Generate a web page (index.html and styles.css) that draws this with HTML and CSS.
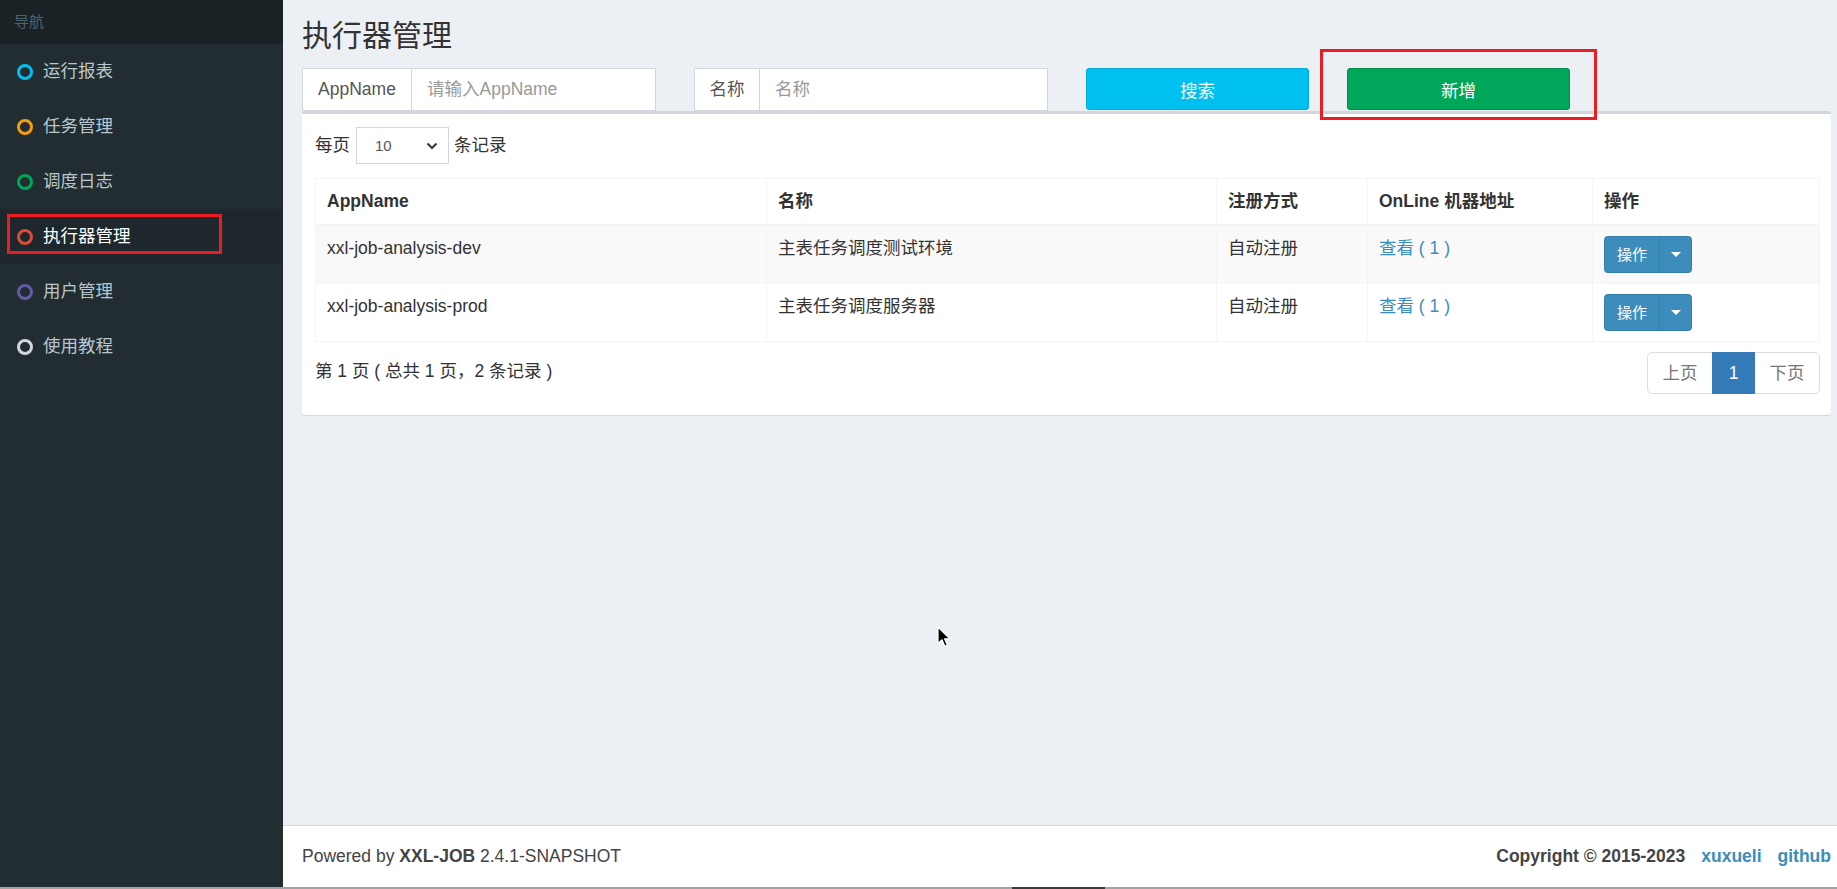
FILE: index.html
```html
<!DOCTYPE html>
<html lang="zh-CN">
<head>
<meta charset="utf-8">
<title>执行器管理</title>
<link rel="stylesheet" href="styles.css">
</head>
<body>
<div class="wrapper">
  <aside class="sidebar">
    <div class="sidebar-header">导航</div>
    <ul class="menu">
      <li class="menu-item"><span class="ring ring-aqua"></span><span>运行报表</span></li>
      <li class="menu-item"><span class="ring ring-yellow"></span><span>任务管理</span></li>
      <li class="menu-item"><span class="ring ring-green"></span><span>调度日志</span></li>
      <li class="menu-item active"><span class="ring ring-red"></span><span>执行器管理</span></li>
      <li class="menu-item"><span class="ring ring-purple"></span><span>用户管理</span></li>
      <li class="menu-item"><span class="ring ring-white"></span><span>使用教程</span></li>
    </ul>
  </aside>
  <div class="main">
    <section class="content">
      <h1 class="page-title">执行器管理</h1>
      <div class="search-row">
        <div class="input-group">
          <span class="addon addon-app">AppName</span>
          <input class="form-input" type="text" placeholder="请输入AppName">
        </div>
        <div class="input-group">
          <span class="addon addon-name">名称</span>
          <input class="form-input" type="text" placeholder="名称">
        </div>
        <button class="btn btn-info">搜索</button>
        <button class="btn btn-success">新增</button>
      </div>
      <div class="box">
        <div class="length-row">
          <span>每页</span>
          <div class="select-box">
            <span>10</span>
            <svg class="chevron" width="12" height="8" viewBox="0 0 12 8"><path d="M1.5 1.5 L6 6 L10.5 1.5" fill="none" stroke="#333" stroke-width="2"/></svg>
          </div>
          <span>条记录</span>
        </div>
        <table class="data-table">
          <colgroup>
            <col class="c1"><col class="c2"><col class="c3"><col class="c4"><col class="c5">
          </colgroup>
          <thead>
            <tr><th>AppName</th><th>名称</th><th>注册方式</th><th>OnLine 机器地址</th><th>操作</th></tr>
          </thead>
          <tbody>
            <tr class="odd">
              <td>xxl-job-analysis-dev</td>
              <td>主表任务调度测试环境</td>
              <td>自动注册</td>
              <td><a class="link">查看 ( 1 )</a></td>
              <td><div class="btn-split"><span class="btn-main">操作</span><span class="btn-caret"><span class="caret"></span></span></div></td>
            </tr>
            <tr>
              <td>xxl-job-analysis-prod</td>
              <td>主表任务调度服务器</td>
              <td>自动注册</td>
              <td><a class="link">查看 ( 1 )</a></td>
              <td><div class="btn-split"><span class="btn-main">操作</span><span class="btn-caret"><span class="caret"></span></span></div></td>
            </tr>
          </tbody>
        </table>
        <div class="table-foot">
          <div class="info">第 1 页 ( 总共 1 页，2 条记录 )</div>
          <ul class="pagination">
            <li class="page disabled">上页</li>
            <li class="page current">1</li>
            <li class="page disabled">下页</li>
          </ul>
        </div>
      </div>
    </section>
    <footer class="footer">
      <div class="foot-left">Powered by <b>XXL-JOB</b> 2.4.1-SNAPSHOT</div>
      <div class="foot-right"><b>Copyright © 2015-2023</b><a class="foot-link">xuxueli</a><a class="foot-link">github</a></div>
    </footer>
  </div>
</div>
<div class="hscroll"><div class="hscroll-thumb"></div></div>
<div class="annot annot-menu"></div>
<div class="annot annot-add"></div>
<svg class="cursor" width="14" height="22" viewBox="0 0 14 22"><path d="M1 1 L1 17.5 L5 13.8 L7.8 20.2 L10.3 19.1 L7.6 12.8 L12.8 12.8 Z" fill="#000" stroke="#fff" stroke-width="1.2" stroke-linejoin="round"/></svg>
</body>
</html>
```

FILE: styles.css
```css
* { box-sizing: border-box; }
html, body { margin: 0; padding: 0; }
body {
  width: 1837px;
  height: 889px;
  overflow: hidden;
  background: #ecf0f5;
  font-family: "Liberation Sans", "Noto Sans CJK SC", sans-serif;
  font-size: 17.5px;
  line-height: 25px;
  color: #333;
}
.wrapper {
  display: flex;
  height: 887px;
}
.sidebar {
  width: 283px;
  flex: none;
  background: #222d32;
}
.sidebar-header {
  height: 44px;
  background: #1a2226;
  color: #4b646f;
  font-size: 15px;
  line-height: 44px;
  padding-left: 14px;
}
.menu { list-style: none; margin: 0; padding: 0; }
.menu-item {
  height: 55px;
  display: flex;
  align-items: center;
  padding-left: 17px;
  color: #b8c7ce;
  font-size: 17.5px;
}
.menu-item.active { background: #1e282c; color: #fff; }
.ring {
  width: 16px;
  height: 16px;
  border-radius: 50%;
  border: 3px solid #fff;
  margin-right: 10px;
  flex: none;
}
.ring-aqua { border-color: #00c0ef; }
.ring-yellow { border-color: #f39c12; }
.ring-green { border-color: #00a65a; }
.ring-red { border-color: #dd4b39; }
.ring-purple { border-color: #605ca8; }
.ring-white { border-color: #d2d6de; }

.main {
  flex: 1;
  display: flex;
  flex-direction: column;
  min-width: 0;
}
.content {
  flex: 1;
  padding: 19px 6px 0 19px;
}
.page-title {
  margin: 0;
  font-size: 30px;
  line-height: 33px;
  font-weight: 400;
  color: #333;
}
.search-row {
  margin-top: 16px;
  display: grid;
  grid-template-columns: 354px 354px 223px 223px;
  column-gap: 38px;
  height: 43px;
}
.input-group {
  display: flex;
  height: 43px;
  border: 1px solid #d2d6de;
  background: #fff;
}
.addon {
  flex: none;
  display: flex;
  align-items: center;
  justify-content: center;
  border-right: 1px solid #d2d6de;
  color: #555;
}
.addon-app { width: 109px; }
.addon-name { width: 65px; }
.form-input {
  flex: 1;
  min-width: 0;
  border: 0;
  outline: 0;
  padding: 0 15px;
  font-family: inherit;
  font-size: 17.5px;
  color: #555;
  background: #fff;
}
.form-input::placeholder { color: #999; }
.btn {
  height: 42px;
  border-radius: 3px;
  border: 1px solid transparent;
  color: #fff;
  font-family: inherit;
  font-size: 17.5px;
  padding: 0;
}
.btn-info { background: #00c0ef; border-color: #00acd6; }
.btn-success { background: #00a65a; border-color: #008d4c; }

.box {
  background: #fff;
  border-top: 3px solid #d2d6de;
  border-radius: 3px;
  box-shadow: 0 1px 1px rgba(0,0,0,0.1);
  padding: 12.5px 12px 21px 13px;
}
.length-row {
  display: flex;
  align-items: center;
  height: 37px;
}
.select-box {
  width: 93px;
  height: 37px;
  margin: 0 5px 0 6px;
  border: 1px solid #d2d6de;
  display: flex;
  align-items: center;
  justify-content: space-between;
  padding: 0 10px 0 18px;
  font-size: 15px;
  color: #555;
}
.chevron { display: block; margin-top: 2px; }

.data-table {
  margin-top: 14.5px;
  width: 1504px;
  border-collapse: collapse;
  table-layout: fixed;
}
.c1 { width: 451px; }
.c2 { width: 450px; }
.c3 { width: 151px; }
.c4 { width: 225px; }
.c5 { width: 227px; }
.data-table th, .data-table td {
  border: 1px solid #f4f4f4;
  padding: 10px 11px;
  text-align: left;
  vertical-align: top;
}
.data-table th {
  font-weight: 700;
  border-bottom-width: 2px;
}
.data-table tr.odd td { background: #f9f9f9; }
.link { color: #3c8dbc; text-decoration: none; }

.btn-split {
  display: inline-flex;
  height: 37px;
  border-radius: 3.5px;
  overflow: hidden;
  background: #3c8dbc;
  border: 1px solid #367fa9;
  color: #fff;
  font-size: 15px;
}
.btn-main {
  width: 55px;
  display: flex;
  align-items: center;
  justify-content: center;
  border-right: 1px solid #367fa9;
}
.btn-caret {
  width: 31px;
  display: flex;
  align-items: center;
  justify-content: center;
}
.caret {
  width: 0;
  height: 0;
  border-top: 5px solid #fff;
  border-left: 5px solid transparent;
  border-right: 5px solid transparent;
}

.table-foot {
  margin-top: 10px;
  display: flex;
  justify-content: space-between;
  align-items: flex-start;
  width: 1505px;
}
.info { padding-top: 7px; }
.pagination {
  list-style: none;
  margin: 0;
  padding: 0;
  display: flex;
  height: 42px;
}
.page {
  height: 42px;
  display: flex;
  align-items: center;
  justify-content: center;
  border: 1px solid #ddd;
  margin-left: -1px;
  color: #777;
  background: #fff;
}
.page:first-child { width: 66px; margin-left: 0; border-radius: 5px 0 0 5px; }
.page:last-child { width: 66px; border-radius: 0 5px 5px 0; }
.page.current {
  width: 43px;
  background: #337ab7;
  border-color: #337ab7;
  color: #fff;
  position: relative;
}

.footer {
  height: 62px;
  flex: none;
  background: #fff;
  border-top: 1px solid #d2d6de;
  display: flex;
  align-items: center;
  justify-content: space-between;
  padding: 0 6px 0 19px;
  color: #444;
  font-size: 17.5px;
}
.foot-right b { font-weight: 700; }
.foot-link {
  color: #3c8dbc;
  font-weight: 700;
  margin-left: 16px;
}

.hscroll {
  height: 2px;
  background: #a3a3a3;
  position: relative;
}
.hscroll-thumb {
  position: absolute;
  left: 1012px;
  top: 0;
  width: 93px;
  height: 2px;
  background: #3a3a3c;
}
.annot {
  position: absolute;
  border: 3px solid #ec1c24;
  pointer-events: none;
}
.annot-menu { left: 7px; top: 214px; width: 215px; height: 40px; }
.annot-add { left: 1320px; top: 49px; width: 277px; height: 71px; }
.cursor {
  position: absolute;
  left: 937px;
  top: 626px;
}
```
